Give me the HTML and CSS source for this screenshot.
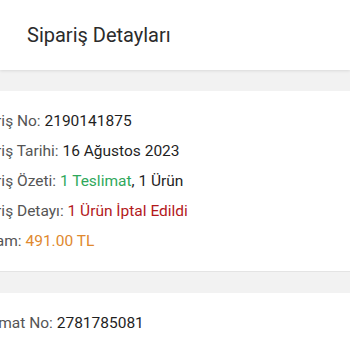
FILE: index.html
```html
<!DOCTYPE html>
<html lang="tr">
<head>
    <meta charset="UTF-8">
    <meta name="viewport" content="width=device-width, initial-scale=1.0">
    <title>Sipariş Detayları</title>
    <link rel="stylesheet" href="styles.css">
</head>
<body>
    <header class="topbar">
        <h1 class="title">Sipariş Detayları</h1>
    </header>

    <div class="gap"></div>

    <section class="card">
        <p class="row"><span class="label">Sipariş No:</span> <span class="value">2190141875</span></p>
        <p class="row"><span class="label">Sipariş Tarihi:</span> <span class="value">16 Ağustos 2023</span></p>
        <p class="row"><span class="label">Sipariş Özeti:</span> <span class="value green">1 Teslimat</span><span class="value">, 1 Ürün</span></p>
        <p class="row"><span class="label">Sipariş Detayı:</span> <span class="value red">1 Ürün İptal Edildi</span></p>
        <p class="row"><span class="label">Toplam:</span> <span class="value orange">491.00 TL</span></p>
    </section>

    <div class="gap"></div>

    <section class="card">
        <p class="row"><span class="label">Teslimat No:</span> <span class="value">2781785081</span></p>
    </section>
</body>
</html>
```

FILE: styles.css
```css
body {
    margin: 0;
    font-family: Roboto, "Noto Sans", Arial, sans-serif;
    background-color: #fff;
    overflow: hidden;
}
.topbar {
    height: 70px;
    display: flex;
    align-items: center;
    padding-left: 27px;
    background-color: #fff;
    box-shadow: 0 1px 3px rgba(0, 0, 0, 0.1);
    position: relative;
}
.title {
    margin: 0;
    font-size: 20px;
    font-weight: 400;
    color: #2b2b2b;
}
.gap {
    height: 21px;
    background-color: #f2f2f2;
}
.card {
    background-color: #fff;
    padding: 15px 0;
    border-bottom: 1px solid #e4e4e4;
}
.row {
    margin: 0 0 0 -34px;
    font-size: 15.5px;
    line-height: 30px;
    white-space: nowrap;
}
.label {
    color: #555;
}
.value {
    color: #1f1f1f;
}
.green {
    color: #2fa85b;
}
.red {
    color: #b3191c;
}
.orange {
    color: #e0892e;
}
```
